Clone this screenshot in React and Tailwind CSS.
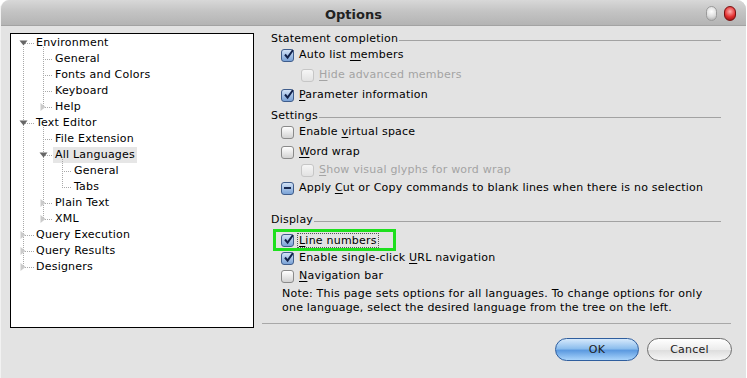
import React from "react";

// tree rows: level, label, kind (leaf | open | closed)
const TREE = [
  { lvl: 0, label: "Environment", kind: "open" },
  { lvl: 1, label: "General", kind: "leaf" },
  { lvl: 1, label: "Fonts and Colors", kind: "leaf" },
  { lvl: 1, label: "Keyboard", kind: "leaf" },
  { lvl: 1, label: "Help", kind: "closed" },
  { lvl: 0, label: "Text Editor", kind: "open" },
  { lvl: 1, label: "File Extension", kind: "leaf" },
  { lvl: 1, label: "All Languages", kind: "open", selected: true },
  { lvl: 2, label: "General", kind: "leaf" },
  { lvl: 2, label: "Tabs", kind: "leaf" },
  { lvl: 1, label: "Plain Text", kind: "closed" },
  { lvl: 1, label: "XML", kind: "closed" },
  { lvl: 0, label: "Query Execution", kind: "closed" },
  { lvl: 0, label: "Query Results", kind: "closed" },
  { lvl: 0, label: "Designers", kind: "closed" },
];

const ROW = 16;
const LINE_X = [12.5, 32.5, 51.5];
const TEXT_X = [25, 44, 63];
const INDENT = ["ml-[25px]", "ml-[44px]", "ml-[63px]"];
const SEL_INDENT = ["ml-[23px]", "ml-[42px]", "ml-[61px]"];
const DOT = "#a9a9a9";

// vertical guide lines: [level, fromRow, toRow]
const GUIDES = [
  [0, 0, 14],
  [1, 0, 4],
  [1, 5, 11],
  [2, 7, 9],
];

const cy = (i) => 9 + ROW * i;

function TreeLines() {
  return (
    <svg className="absolute left-0 top-0 pointer-events-none" width="242" height="293">
      {GUIDES.map(([l, a, b], i) => (
        <line key={"g" + i} x1={LINE_X[l]} x2={LINE_X[l]} y1={cy(a) + 4} y2={cy(b) + 0.5}
          stroke={DOT} strokeDasharray="1 1" shapeRendering="crispEdges" />
      ))}
      {TREE.map((t, i) => (
        <line key={"h" + i} x1={LINE_X[t.lvl] + 1} x2={TEXT_X[t.lvl] - 2} y1={cy(i) + 0.5} y2={cy(i) + 0.5}
          stroke={DOT} strokeDasharray="1 1" shapeRendering="crispEdges" />
      ))}
      {TREE.map((t, i) => {
        const x = LINE_X[t.lvl];
        const y = cy(i);
        if (t.kind === "open")
          return <polygon key={"a" + i} points={`${x - 4},${y - 2.5} ${x + 4},${y - 2.5} ${x},${y + 2.5}`} fill="#666" />;
        if (t.kind === "closed")
          return <polygon key={"a" + i} points={`${x - 3},${y - 4} ${x - 3},${y + 4} ${x + 2},${y}`} fill="#cbcbcb" />;
        return null;
      })}
    </svg>
  );
}

function Tree() {
  return (
    <div className="relative mt-[2px] w-[244px] h-[295px] pt-[1px] border border-black bg-white shrink-0">
      <TreeLines />
      {TREE.map((t, i) => (
        <div key={i} className="h-[16px] flex items-center">
          {t.selected ? (
            <span className={SEL_INDENT[t.lvl] + " px-[2px] bg-[#e6e6e6] leading-[16px]"}>{t.label}</span>
          ) : (
            <span className={INDENT[t.lvl] + " leading-[16px]"}>{t.label}</span>
          )}
        </div>
      ))}
    </div>
  );
}

function Box({ state = "off", disabled }) {
  if (disabled)
    return <span className="w-[13px] h-[13px] rounded-[3px] border border-[#c6c6c6] bg-[linear-gradient(to_bottom,#f6f6f6,#e2e2e2)] shrink-0" />;
  if (state === "off")
    return <span className="w-[13px] h-[13px] rounded-[3px] border border-[#8a8a8a] bg-[linear-gradient(to_bottom,#ffffff,#d2d2d2)] shrink-0" />;
  return (
    <span className="relative w-[13px] h-[13px] rounded-[3px] border border-[#3f5d8c] bg-[linear-gradient(to_bottom,#d2e2f6,#7aa2d6)] shrink-0 flex items-center justify-center">
      {state === "on" ? (
        <svg width="11" height="11" viewBox="0 0 11 11" className="absolute left-[1px] top-[-1px]">
          <path d="M2 5.5 L4.6 8.6 L10 1" fill="none" stroke="#12224a" strokeWidth="2" />
        </svg>
      ) : (
        <span className="w-[7px] h-[2px] bg-[#1a2a50]" />
      )}
    </span>
  );
}

function Check({ state, disabled, children, sub, className = "" }) {
  return (
    <div className={(sub ? "pl-[39px] " : "pl-[19px] ") + "h-[16px] flex items-center " + className}>
      <Box state={state} disabled={disabled} />
      <span className={"ml-[5px] leading-[16px] " + (disabled ? "text-[#a4a4a4]" : "text-black")}>{children}</span>
    </div>
  );
}

function Group({ label, className = "" }) {
  return (
    <div className={"h-[16px] flex items-center pl-[9px] mr-[10px] " + className}>
      <span>{label}</span>
      <span className="flex-1 h-px bg-[#a2a2a2] ml-[1px] mt-[2px]" />
    </div>
  );
}

const U = ({ children }) => <span className="underline underline-offset-2">{children}</span>;

export default function App() {
  return (
    <div className="w-[747px] h-[378px] bg-white overflow-hidden font-['DejaVu_Sans',sans-serif] text-[11px] tracking-[0.22px] text-black">
      <div className="w-[746px] h-[378px] rounded-t-[9px] overflow-hidden bg-[#e3e3e3] border-l border-[#f2f2f2]">
        {/* title bar */}
        <div className="h-[26px] flex items-center bg-[linear-gradient(to_bottom,#d8d8d8,#c4c4c4_45%,#b4b4b4)] border-b border-[#a3a3a3]">
          <div className="flex-1 flex justify-center pt-[4px]">
            <span className="font-bold text-[13px] text-[#222] tracking-[0px]">Options</span>
          </div>
          <div className="flex items-center gap-[7px] pr-[10px] pt-[2px]">
            <span className="w-[11px] h-[15px] rounded-full border border-[#9a9a9a] bg-[radial-gradient(circle_at_50%_35%,#ffffff,#dcdcdc_55%,#a8a8a8)]" />
            <span className="w-[12px] h-[15px] rounded-full border border-[#7a1010] bg-[radial-gradient(circle_at_50%_35%,#ffb0b0,#e23030_55%,#8a0c0c)]" />
          </div>
        </div>

        {/* body */}
        <div className="flex pt-[5px] pl-[9px]">
          <Tree />
          <div className="ml-[8px] w-[469px] flex flex-col">
            <Group label="Statement completion" />
            <Check state="on">Auto list <U>m</U>embers</Check>
            <Check sub disabled className="mt-[4px]"><U>H</U>ide advanced members</Check>
            <Check state="on" className="mt-[4px]"><U>P</U>arameter information</Check>

            <Group label="Settings" className="mt-[5px]" />
            <Check>Enable <U>v</U>irtual space</Check>
            <Check className="mt-[4px]"><U>W</U>ord wrap</Check>
            <Check sub disabled className="mt-[2px]"><U>S</U>how visual glyphs for word wrap</Check>
            <Check state="mixed" className="mt-[2px]">Apply <U>C</U>ut or Copy commands to blank lines when there is no selection</Check>

            <Group label="Display" className="mt-[16px]" />
            <div className="relative mt-[4px] h-[16px] flex items-center pl-[19px]">
              <span className="absolute left-[11px] top-[-3px] w-[123px] h-[22px] border-[3px] border-[#1ee01e]" />
              <Box state="on" />
              <span className="ml-[3px] px-[1px] leading-[13px] border border-dotted border-[#555]"><U>L</U>ine numbers</span>
            </div>
            <Check state="on" className="mt-[2px]">Enable single-click <U>U</U>RL navigation</Check>
            <Check className="mt-[2px]"><U>N</U>avigation bar</Check>
            <p className="mt-[3px] pl-[20px] leading-[14px]">
              Note: This page sets options for all languages. To change options for only
              <br />
              one language, select the desired language from the tree on the left.
            </p>

            <div className="mt-[8px] h-px bg-[#a8a8a8]" />
            <div className="mt-[14px] flex justify-end gap-[8px] mr-[-1px]">
              <button className="w-[84px] h-[23px] rounded-full border border-[#2f5e9e] bg-[linear-gradient(to_bottom,#d6e9fc,#8ebfee_45%,#5c9ae0_55%,#a9d4fb)] text-[11px] text-[#1c1c1c] leading-none">
                OK
              </button>
              <button className="w-[85px] h-[23px] rounded-full border border-[#6e6e6e] bg-[linear-gradient(to_bottom,#ffffff,#ececec_50%,#dedede_55%,#f6f6f6)] text-[11px] text-[#1c1c1c] leading-none">
                Cancel
              </button>
            </div>
          </div>
        </div>
      </div>
    </div>
  );
}
